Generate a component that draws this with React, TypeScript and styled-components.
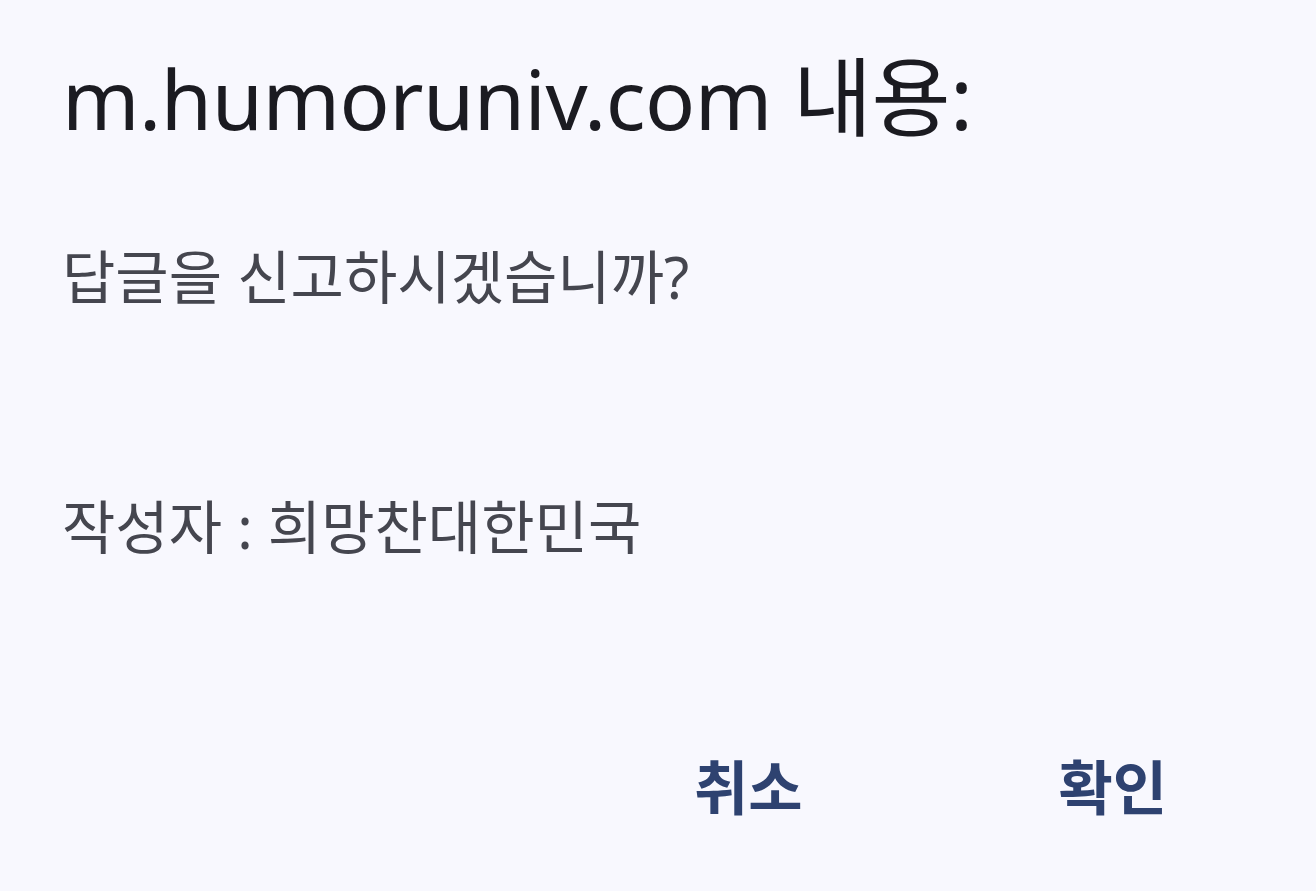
import * as React from "react";
import styled, { createGlobalStyle } from "styled-components";

const GlobalStyle = createGlobalStyle`
  html, body {
    margin: 0;
    padding: 0;
    background: #f8f8fe;
  }
  #root {
    min-height: 891px;
  }
`;

function App(): JSX.Element {
  return (
    <>
      <GlobalStyle />
      <Dialog>
        <Title>
          m.humoruniv.com <TitleKo>내용:</TitleKo>
        </Title>
        <Message>
          <Line>답글을 신고하시겠습니까?</Line>
          <Line>작성자 : 희망찬대한민국</Line>
        </Message>
        <Actions>
          <ActionButton>취소</ActionButton>
          <ActionButton>확인</ActionButton>
        </Actions>
      </Dialog>
    </>
  );
}

const Dialog = styled.div`
  display: flex;
  flex-direction: column;
  width: 1316px;
  height: 891px;
  box-sizing: border-box;
  padding: 42px 62px 0 62px;
  background: #f8f8fe;
  font-family: "Noto Sans", "Noto Sans CJK KR", sans-serif;
`;

const Title = styled.div`
  font-size: 83px;
  line-height: 110px;
  color: #1b1b21;
  letter-spacing: -0.5px;
  white-space: nowrap;
`;

const TitleKo = styled.span`
  font-size: 86px;
`;

const Message = styled.div`
  display: flex;
  flex-direction: column;
  gap: 174px;
  margin-top: 86px;
`;

const Line = styled.div`
  font-size: 58px;
  line-height: 76px;
  color: #45464f;
  white-space: nowrap;
`;

const Actions = styled.div`
  display: flex;
  justify-content: flex-end;
  gap: 256px;
  margin-top: 184px;
  padding-right: 87px;
`;

const ActionButton = styled.button`
  border: none;
  background: none;
  padding: 0;
  font-family: "Noto Sans", "Noto Sans CJK KR", sans-serif;
  font-size: 59px;
  font-weight: 700;
  line-height: 76px;
  color: #2e4270;
  cursor: pointer;
`;

export default App;
